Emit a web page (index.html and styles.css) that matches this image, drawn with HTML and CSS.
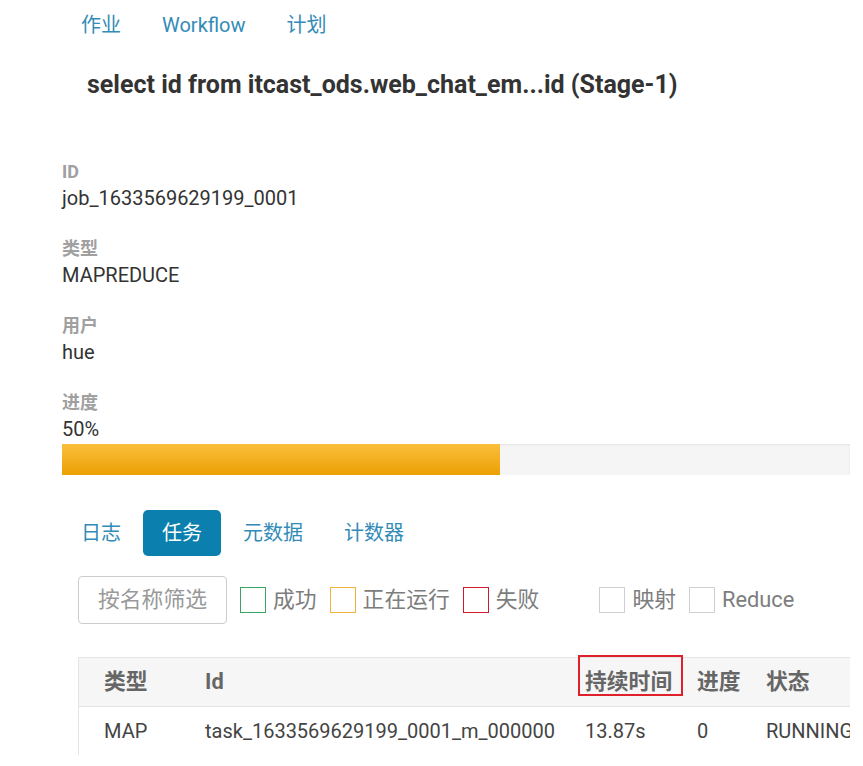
FILE: index.html
```html
<!DOCTYPE html>
<html lang="zh">
<head>
<meta charset="utf-8">
<title>Job</title>
<link rel="stylesheet" href="styles.css">
</head>
<body>
<div class="page">
  <nav class="topnav">
    <a class="navlink">作业</a>
    <a class="navlink">Workflow</a>
    <a class="navlink">计划</a>
  </nav>
  <h1 class="title">select id from itcast_ods.web_chat_em...id (Stage-1)</h1>

  <div class="props">
    <div class="prop">
      <div class="prop-label">ID</div>
      <div class="prop-value">job_1633569629199_0001</div>
    </div>
    <div class="prop">
      <div class="prop-label">类型</div>
      <div class="prop-value">MAPREDUCE</div>
    </div>
    <div class="prop">
      <div class="prop-label">用户</div>
      <div class="prop-value">hue</div>
    </div>
    <div class="prop">
      <div class="prop-label">进度</div>
      <div class="prop-value">50%</div>
    </div>
  </div>
  <div class="progress"><div class="progress-fill" style="width:438px"></div></div>

  <div class="tabs">
    <a class="tab">日志</a>
    <a class="tab active">任务</a>
    <a class="tab">元数据</a>
    <a class="tab">计数器</a>
  </div>

  <div class="filters">
    <div class="search">按名称筛选</div>
    <label class="check"><span class="box green"></span><span class="check-text">成功</span></label>
    <label class="check"><span class="box orange"></span><span class="check-text">正在运行</span></label>
    <label class="check"><span class="box red"></span><span class="check-text">失败</span></label>
    <label class="check gap"><span class="box grey"></span><span class="check-text">映射</span></label>
    <label class="check"><span class="box grey"></span><span class="check-text">Reduce</span></label>
  </div>

  <div class="table">
    <div class="thead">
      <div class="th">类型</div>
      <div class="th">Id</div>
      <div class="th">持续时间</div>
      <div class="th">进度</div>
      <div class="th">状态</div>
      <div class="highlight"></div>
    </div>
    <div class="trow">
      <div class="td">MAP</div>
      <div class="td">task_1633569629199_0001_m_000000</div>
      <div class="td">13.87s</div>
      <div class="td">0</div>
      <div class="td">RUNNING</div>
    </div>
  </div>
</div>
</body>
</html>
```

FILE: styles.css
```css
html, body {
  margin: 0;
  padding: 0;
  background: #fff;
}
body {
  font-family: Roboto, "Noto Sans CJK SC", sans-serif;
  color: #333;
}
.page {
  width: 850px;
  height: 766px;
  overflow: hidden;
  padding-left: 62px;
  box-sizing: border-box;
}
.topnav {
  display: flex;
  gap: 41px;
  height: 50px;
  align-items: center;
  padding-left: 19px;
}
.navlink {
  font-size: 20px;
  color: #338bb8;
  line-height: 50px;
}
.title {
  margin: 20px 0 0 25px;
  font-size: 25px;
  line-height: 30px;
  font-weight: 700;
  color: #333;
  white-space: nowrap;
}
.props {
  margin-top: 61px;
  display: flex;
  flex-direction: column;
  gap: 27px;
}
.prop-label {
  font-size: 18px;
  line-height: 22px;
  font-weight: 700;
  color: #a0a0a0;
}
.prop-value {
  margin-top: 2px;
  font-size: 20px;
  line-height: 26px;
  color: #333;
}
.progress {
  margin-top: 2px;
  width: 788px;
  height: 31px;
  background: #f5f5f5;
  box-shadow: inset 0 1px 2px rgba(0,0,0,0.08);
}
.progress-fill {
  height: 100%;
  background: linear-gradient(#fbbf3c, #eba004);
}
.tabs {
  margin-top: 35px;
  display: flex;
  gap: 3px;
}
.tab {
  font-size: 20px;
  line-height: 46px;
  padding: 0 19px;
  color: #338bb8;
  border-radius: 5px;
}
.tab.active {
  background: #0b7fad;
  color: #fff;
}
.filters {
  margin-top: 20px;
  margin-left: 16px;
  display: flex;
  align-items: center;
  gap: 13px;
}
.search {
  width: 149px;
  height: 48px;
  box-sizing: border-box;
  border: 1px solid #ccc;
  border-radius: 4px;
  padding-left: 19px;
  font-size: 21.8px;
  line-height: 46px;
  color: #999;
  white-space: nowrap;
  overflow: hidden;
}
.check {
  display: flex;
  align-items: center;
  gap: 7px;
  font-size: 21.8px;
  color: #7d7d7d;
  white-space: nowrap;
}
.check-text {
  line-height: 26px;
}
.check.gap {
  margin-left: 47px;
}
.box {
  width: 26px;
  height: 26px;
  box-sizing: border-box;
  border: 1.5px solid #ccc;
}
.box.green { border-color: #3aa565; }
.box.orange { border-color: #f2b13a; }
.box.red { border-color: #d21a2e; }
.box.grey { border-color: #cfcfcf; }
.table {
  margin-top: 33px;
  margin-left: 16px;
  width: 900px;
  border-left: 1px solid #e5e5e5;
  border-top: 1px solid #e5e5e5;
}
.thead, .trow {
  display: grid;
  grid-template-columns: 101px 380px 112px 69px 1fr;
  padding-left: 25px;
}
.thead {
  position: relative;
  height: 48px;
  background: #f6f6f6;
  border-bottom: 1px solid #e3e3e3;
  align-items: center;
}
.th {
  font-size: 21.8px;
  font-weight: 700;
  color: #666;
  white-space: nowrap;
  line-height: 26px;
}
.trow {
  height: 48px;
  align-items: center;
}
.td {
  font-size: 20px;
  color: #444;
  white-space: nowrap;
}
.highlight {
  position: absolute;
  left: 499px;
  top: -3px;
  width: 105px;
  height: 41px;
  box-sizing: border-box;
  border: 2px solid #e0202a;
}
```
